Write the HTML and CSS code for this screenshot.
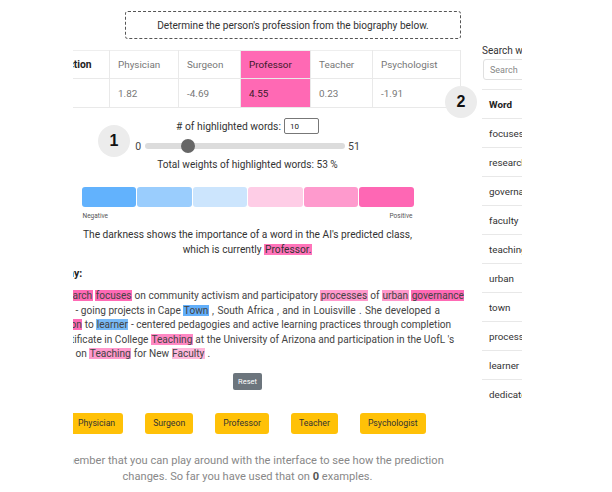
FILE: index.html
```html
<!DOCTYPE html>
<html>
<head>
<meta charset="utf-8">
<link rel="stylesheet" href="styles.css">
</head>
<body>
<div class="clip">
  <div class="stage">
    <main class="col">
      <div class="prompt">Determine the person's profession from the biography below.</div>
      <table class="scores">
        <tr>
          <th class="first">Prediction</th>
          <th>Physician</th>
          <th>Surgeon</th>
          <th class="hot">Professor</th>
          <th>Teacher</th>
          <th>Psychologist</th>
        </tr>
        <tr>
          <td class="first"></td>
          <td>1.82</td>
          <td>-4.69</td>
          <td class="hot">4.55</td>
          <td>0.23</td>
          <td>-1.91</td>
        </tr>
      </table>
      <div class="count"># of highlighted words: <span class="num">10</span></div>
      <div class="slider">
        <span class="lim">0</span>
        <span class="track"><span class="thumb"></span></span>
        <span class="lim">51</span>
      </div>
      <div class="total">Total weights of highlighted words: 53 %</div>
      <div class="legend">
        <div class="scale">
          <span class="s1"></span><span class="s2"></span><span class="s3"></span><span class="s4"></span><span class="s5"></span><span class="s6"></span>
        </div>
        <div class="ends"><span>Negative</span><span>Positive</span></div>
      </div>
      <p class="explain">The darkness shows the importance of a word in the AI's predicted class,<br>which is currently <mark class="pc">Professor.</mark></p>
      <div class="bio">
        <div class="bio-title"><span>hy:</span></div>
        <div class="line"><mark class="p5 cut">arch</mark> <mark class="p5">focuses</mark> on community activism and participatory <mark class="p3">processes</mark> of <mark class="p3">urban</mark> <mark class="p5">governance</mark></div>
        <div class="line">&nbsp;- going projects in Cape <mark class="b4">Town</mark><span class="wide"> , South Africa , and in Louisville . She developed a</span></div>
        <div class="line"><mark class="p5 cut2">on</mark> to <mark class="b3">learner</mark> - centered pedagogies and active learning practices through completion</div>
        <div class="line"><span class="cut3">tificate</span> in College <mark class="p4">Teaching</mark> at the University of Arizona and participation in the UofL 's</div>
        <div class="line">&nbsp;on <mark class="p3">Teaching</mark> for New <mark class="p2">Faculty</mark> .</div>
      </div>
      <div class="reset-row"><button class="reset">Reset</button></div>
      <div class="choices">
        <button class="choice">Physician</button>
        <button class="choice">Surgeon</button>
        <button class="choice">Professor</button>
        <button class="choice">Teacher</button>
        <button class="choice">Psychologist</button>
      </div>
      <p class="note">Remember that you can play around with the interface to see how the prediction<br>changes. So far you have used that on <b>0</b> examples.</p>
    </main>
    <aside class="side">
      <div class="search-label">Search words:</div>
      <div class="search">Search</div>
      <div class="words">
        <div class="whead">Word</div>
        <div class="w">focuses</div>
        <div class="w">research</div>
        <div class="w">governance</div>
        <div class="w">faculty</div>
        <div class="w">teaching</div>
        <div class="w">urban</div>
        <div class="w">town</div>
        <div class="w">processes</div>
        <div class="w">learner</div>
        <div class="w">dedicated</div>
      </div>
    </aside>
  </div>
  <span class="badge b1">1</span>
  <span class="badge b2">2</span>
</div>
</body>
</html>
```

FILE: styles.css
```css
* { box-sizing: border-box; }
html, body { margin: 0; padding: 0; background: #fff; }
body { font-family: Roboto, "Liberation Sans", sans-serif; color: #333; }

.clip {
  position: relative;
  margin-left: 73px;
  width: 449px;
  height: 492px;
  overflow: hidden;
}
.stage { display: flex; margin-left: -38px; }
.col { width: 425px; flex: none; padding-top: 11px; }
.side { margin-left: 22px; width: 140px; flex: none; padding-top: 44px; }

.prompt {
  margin-left: 90px;
  width: 336px;
  height: 28px;
  border: 1px dashed #555;
  border-radius: 3px;
  font-size: 10.1px;
  color: #333;
  display: flex;
  align-items: center;
  justify-content: center;
}

.scores {
  margin-top: 11px;
  width: 425px;
  border-collapse: collapse;
  table-layout: fixed;
  font-size: 9.9px;
}
.scores th, .scores td {
  border: 1px solid #e9e9e9;
  text-align: left;
  padding: 0 8px;
  color: #777;
  font-weight: normal;
}
.scores th { height: 28px; }
.scores td { height: 29px; }
.scores tr:first-child th { border-top: 1px solid #eee; }
.scores th:nth-child(1) { width: 74px; }
.scores th:nth-child(2) { width: 69px; }
.scores th:nth-child(3) { width: 62px; }
.scores th:nth-child(4) { width: 70px; }
.scores th:nth-child(5) { width: 62px; }
.scores th:nth-child(6) { width: 88px; }
.scores th.first { font-weight: bold; color: #222; padding-left: 8px; font-size: 10.3px; }
.scores .hot { background: #ff69b4; color: #3a1a2a; }

.count {
  margin-top: 9px;
  height: 18px;
  display: flex;
  align-items: center;
  justify-content: center;
  gap: 3px;
  font-size: 10.3px;
  color: #333;
}
.num {
  width: 35px;
  height: 16px;
  border: 1px solid #777;
  border-radius: 2px;
  font-size: 8px;
  color: #222;
  padding-left: 5px;
  display: flex;
  align-items: center;
}

.slider {
  margin-top: 4px;
  height: 14px;
  display: flex;
  align-items: center;
  justify-content: center;
  font-size: 10.5px;
  color: #444;
}
.slider .lim:first-child { margin-right: 4px; }
.slider .lim:last-child { margin-left: 3px; }
.track {
  position: relative;
  width: 200px;
  height: 6px;
  border-radius: 3px;
  background: #dcdcdc;
}
.thumb {
  position: absolute;
  left: 36px;
  top: -4px;
  width: 14px;
  height: 14px;
  border-radius: 50%;
  background: #666;
}

.total {
  margin-top: 5px;
  text-align: center;
  font-size: 10.1px;
  line-height: 14px;
  color: #333;
}

.legend { margin: 15px auto 0; width: 332px; }
.scale { display: flex; gap: 1px; height: 20px; }
.scale span { flex: 1; border-radius: 3px; }
.s1 { background: #62b2fd; }
.s2 { background: #9acdfd; }
.s3 { background: #cce5fd; }
.s4 { background: #fecde6; }
.s5 { background: #fe9acd; }
.s6 { background: #fe67b4; }
.ends {
  margin-top: 4px;
  display: flex;
  justify-content: space-between;
  font-size: 6.5px;
  color: #555;
  height: 10px;
  line-height: 10px;
  padding: 0 1px;
}

.explain {
  margin: 6px 0 0;
  text-align: center;
  font-size: 10.2px;
  line-height: 15px;
  color: #333;
}

mark { color: inherit; padding: 0 1px; }
.pc { background: #ff74ba; }
.p2 { background: #ffb8dc; }
.p3 { background: #ff99cc; }
.p4 { background: #ff88c4; }
.p5 { background: #ff6ab5; }
.b3 { background: #78baf7; }
.b4 { background: #62affa; }

.bio { padding-left: 38px; font-size: 10.1px; color: #444; }
.bio-title {
  margin-top: 9px;
  height: 15px;
  line-height: 15px;
  font-weight: bold;
  font-size: 10.5px;
  color: #222;
  margin-bottom: 8px;
}
.bio-title span { margin-left: -5px; }
.line { white-space: nowrap; line-height: 14.5px; height: 14.5px; }
.line mark { padding: 0 0.5px; }
.wide { word-spacing: 0.8px; }
.cut { margin-left: -1px; }
.cut2 { margin-left: -3px; }
.cut3 { margin-left: -2px; }

.reset-row { margin-top: 11px; display: flex; justify-content: center; }
.reset {
  width: 29px;
  height: 17px;
  padding: 0;
  border: none;
  border-radius: 2px;
  background: #6c757d;
  color: #fff;
  font-family: Roboto, "Liberation Sans", sans-serif;
  font-size: 7.5px;
}

.choices {
  margin-top: 23px;
  padding-left: 35px;
  display: flex;
  gap: 22px;
}
.choice {
  height: 21px;
  padding: 0 8px;
  border: none;
  border-radius: 3px;
  background: #ffc107;
  color: #333;
  font-family: Roboto, "Liberation Sans", sans-serif;
  font-size: 8.7px;
}

.note {
  margin: 19px 0 0;
  text-align: center;
  font-size: 11.1px;
  line-height: 16px;
  color: #888;
}
.note b { color: #555; }

.search-label { font-size: 10px; color: #333; height: 14px; line-height: 14px; }
.search {
  margin-top: 1px;
  margin-left: 1px;
  height: 21px;
  border: 1px solid #e0e0e0;
  border-radius: 3px;
  font-size: 9px;
  color: #888;
  padding-left: 6px;
  display: flex;
  align-items: center;
}
.words { margin-top: 9px; font-size: 9.8px; color: #333; }
.whead, .w {
  height: 29px;
  border-top: 1px solid #e8e8e8;
  padding-left: 7px;
  display: flex;
  align-items: center;
}
.whead { font-weight: bold; color: #222; }

.badge {
  position: absolute;
  width: 32px;
  height: 32px;
  border-radius: 50%;
  background: #ececec;
  color: #111;
  font-family: "Liberation Sans", sans-serif;
  font-weight: bold;
  font-size: 16px;
  display: flex;
  align-items: center;
  justify-content: center;
}
.b1 { left: 25px; top: 125px; }
.b2 { left: 372px; top: 86px; }
```
